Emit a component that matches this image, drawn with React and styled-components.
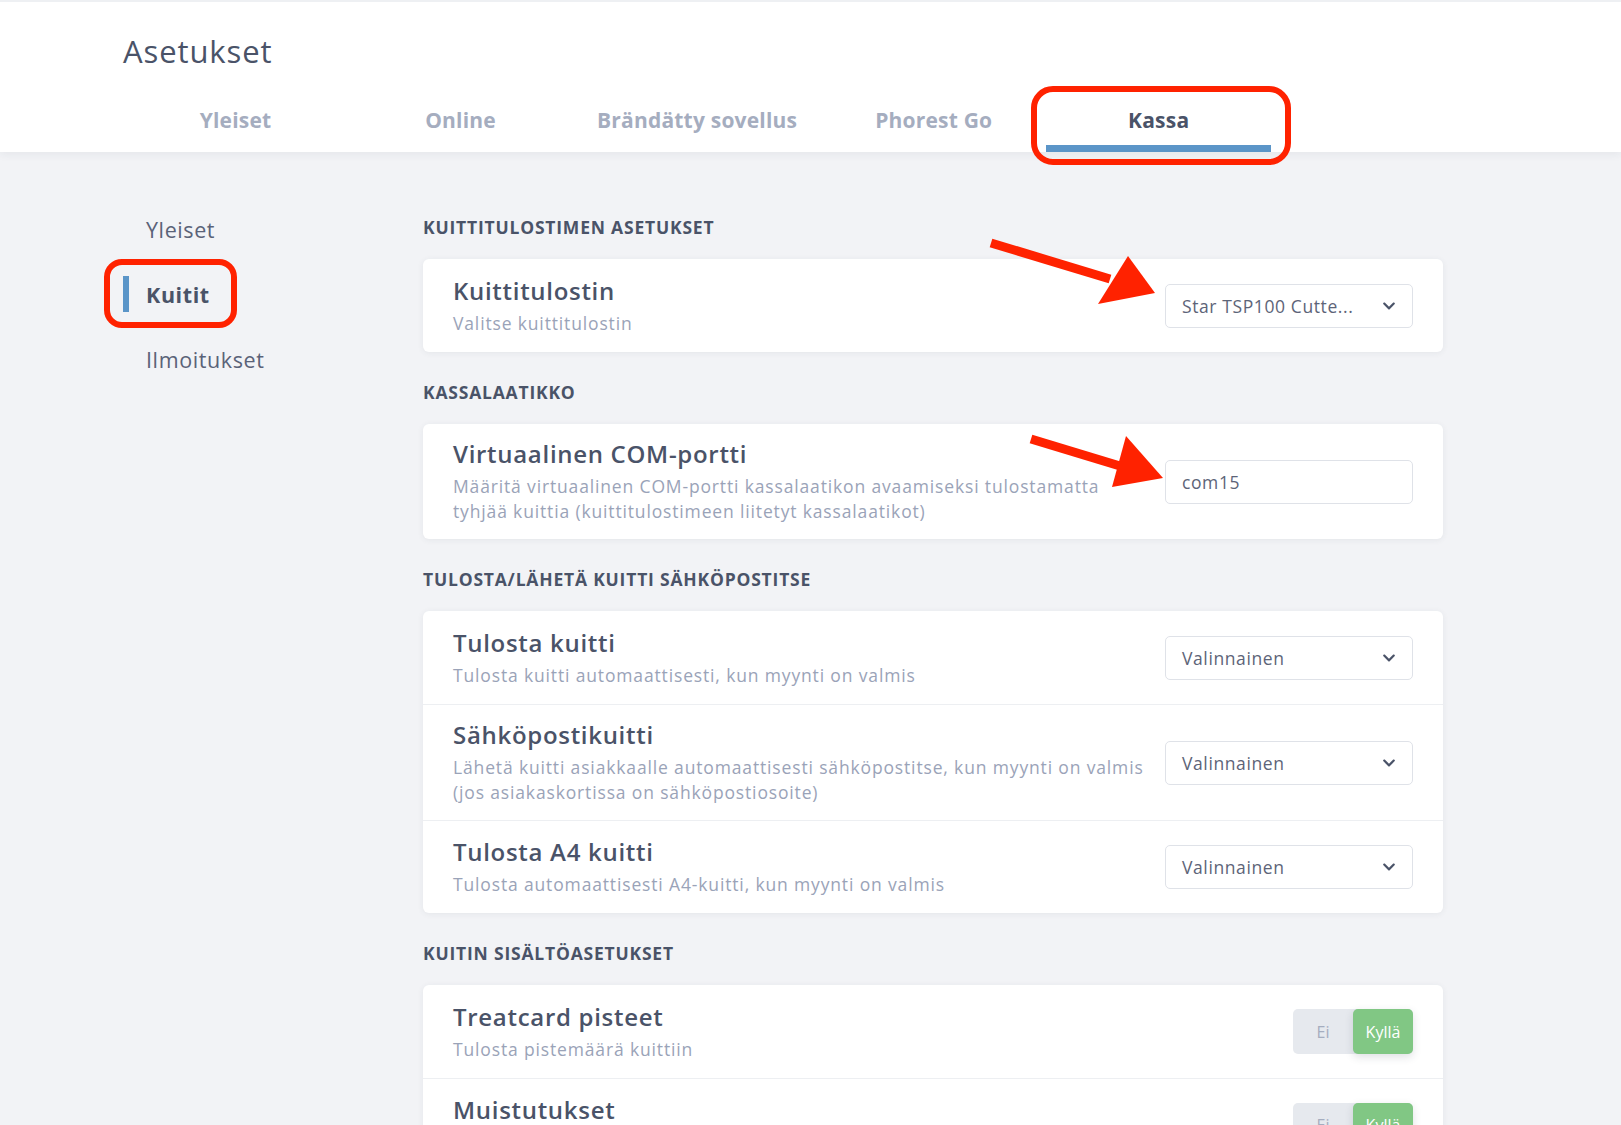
import React from "react";
import styled, { createGlobalStyle } from "styled-components";
import { FaChevronDown } from "react-icons/fa";

const GlobalStyle = createGlobalStyle`
  * { box-sizing: border-box; }
  body {
    margin: 0;
    background: #f2f3f6;
    font-family: "Open Sans", "Noto Sans", sans-serif;
    color: #4a5368;
  }
`;

const tabs = ["Yleiset", "Online", "Brändätty sovellus", "Phorest Go", "Kassa"];
const sideItems = ["Yleiset", "Kuitit", "Ilmoitukset"];

const App = () => {
  return (
    <Page>
      <GlobalStyle />
      <Header>
        <Title>Asetukset</Title>
        <TabRow>
          {tabs.map((t) => (
            <Tab key={t} active={t === "Kassa"}>
              {t}
              {t === "Kassa" && <TabMark />}
            </Tab>
          ))}
        </TabRow>
      </Header>

      <Body>
        <Sidebar>
          {sideItems.map((s) => (
            <SideItem key={s} active={s === "Kuitit"}>
              {s}
              {s === "Kuitit" && <SideMark />}
            </SideItem>
          ))}
        </Sidebar>

        <Main>
          <SectionTitle>Kuittitulostimen asetukset</SectionTitle>
          <Card>
            <Row>
              <RowText>
                <RowTitle>Kuittitulostin</RowTitle>
                <RowDesc>Valitse kuittitulostin</RowDesc>
              </RowText>
              <Select>
                <span>Star TSP100 Cutte...</span>
                <FaChevronDown size={14} />
              </Select>
            </Row>
          </Card>

          <SectionTitle>Kassalaatikko</SectionTitle>
          <Card>
            <Row>
              <RowText>
                <RowTitle>Virtuaalinen COM-portti</RowTitle>
                <RowDesc>
                  Määritä virtuaalinen COM-portti kassalaatikon avaamiseksi tulostamatta
                  <br />
                  tyhjää kuittia (kuittitulostimeen liitetyt kassalaatikot)
                </RowDesc>
              </RowText>
              <Input>com15</Input>
            </Row>
          </Card>

          <SectionTitle>Tulosta/lähetä kuitti sähköpostitse</SectionTitle>
          <Card>
            <Row>
              <RowText>
                <RowTitle>Tulosta kuitti</RowTitle>
                <RowDesc>Tulosta kuitti automaattisesti, kun myynti on valmis</RowDesc>
              </RowText>
              <Select>
                <span>Valinnainen</span>
                <FaChevronDown size={14} />
              </Select>
            </Row>
            <Row>
              <RowText>
                <RowTitle>Sähköpostikuitti</RowTitle>
                <RowDesc>
                  Lähetä kuitti asiakkaalle automaattisesti sähköpostitse, kun myynti on valmis
                  <br />
                  (jos asiakaskortissa on sähköpostiosoite)
                </RowDesc>
              </RowText>
              <Select>
                <span>Valinnainen</span>
                <FaChevronDown size={14} />
              </Select>
            </Row>
            <Row>
              <RowText>
                <RowTitle>Tulosta A4 kuitti</RowTitle>
                <RowDesc>Tulosta automaattisesti A4-kuitti, kun myynti on valmis</RowDesc>
              </RowText>
              <Select>
                <span>Valinnainen</span>
                <FaChevronDown size={14} />
              </Select>
            </Row>
          </Card>

          <SectionTitle>Kuitin sisältöasetukset</SectionTitle>
          <Card>
            <Row>
              <RowText>
                <RowTitle>Treatcard pisteet</RowTitle>
                <RowDesc>Tulosta pistemäärä kuittiin</RowDesc>
              </RowText>
              <Toggle>
                <ToggleOpt>Ei</ToggleOpt>
                <ToggleOpt on>Kyllä</ToggleOpt>
              </Toggle>
            </Row>
            <Row>
              <RowText>
                <RowTitle>Muistutukset</RowTitle>
                <RowDesc>Tulosta tulevat ajanvaraukset kuittiin</RowDesc>
              </RowText>
              <Toggle>
                <ToggleOpt>Ei</ToggleOpt>
                <ToggleOpt on>Kyllä</ToggleOpt>
              </Toggle>
            </Row>
          </Card>
        </Main>
      </Body>

      <Arrows width="1621" height="1125" viewBox="0 0 1621 1125">
        <line x1="991" y1="243" x2="1110" y2="279" stroke="#ff2200" strokeWidth="9" />
        <polygon points="1155,293 1098,304 1128,256" fill="#ff2200" />
        <line x1="1031" y1="439" x2="1120" y2="466" stroke="#ff2200" strokeWidth="9" />
        <polygon points="1163,478 1112,487 1126,436" fill="#ff2200" />
      </Arrows>
    </Page>
  );
};

const Page = styled.div`
  position: relative;
  min-height: 100vh;
  overflow: hidden;
`;

const Header = styled.header`
  background: #ffffff;
  border-top: 2px solid #eef0f3;
  padding: 31px 0 0 123px;
  box-shadow: 0 3px 8px rgba(40, 50, 70, 0.06);
  position: relative;
  z-index: 1;
`;

const Title = styled.h1`
  margin: 0;
  font-size: 31px;
  line-height: 36px;
  font-weight: 500;
  color: #4a5368;
  letter-spacing: 0.9px;
`;

const TabRow = styled.nav`
  display: flex;
  margin-top: 23px;
`;

const Tab = styled.div`
  position: relative;
  min-width: 225px;
  height: 60px;
  display: flex;
  align-items: center;
  justify-content: center;
  padding: 2px 24px 0;
  font-size: 21px;
  font-weight: 700;
  letter-spacing: 0.2px;
  color: ${(p) => (p.active ? "#4a5368" : "#a5adbf")};
  border-bottom: 7px solid ${(p) => (p.active ? "#5b95c8" : "transparent")};
`;

const TabMark = styled.span`
  position: absolute;
  top: -6px;
  left: -15px;
  right: -20px;
  bottom: -20px;
  border: 6px solid #ff2200;
  border-radius: 22px;
`;

const Body = styled.div`
  display: flex;
  padding-left: 123px;
`;

const Sidebar = styled.aside`
  width: 300px;
  flex-shrink: 0;
  padding-top: 59px;
  display: flex;
  flex-direction: column;
  gap: 29px;
`;

const SideItem = styled.div`
  position: relative;
  height: 36px;
  display: flex;
  align-items: center;
  padding-left: 17px;
  font-size: 21.5px;
  letter-spacing: 0.6px;
  font-weight: ${(p) => (p.active ? 700 : 400)};
  color: ${(p) => (p.active ? "#4a5368" : "#5a6278")};
  border-left: 6px solid ${(p) => (p.active ? "#5b95c8" : "transparent")};
`;

const SideMark = styled.span`
  position: absolute;
  top: -17px;
  left: -25px;
  width: 133px;
  height: 69px;
  border: 6px solid #ff2200;
  border-radius: 18px;
`;

const Main = styled.main`
  width: 1020px;
  padding-top: 65px;
  padding-bottom: 40px;
`;

const SectionTitle = styled.h2`
  margin: 0 0 22px;
  font-size: 17.5px;
  line-height: 20px;
  font-weight: 700;
  text-transform: uppercase;
  letter-spacing: 0.8px;
  color: #4a5368;

  & ~ & {
    margin-top: 30px;
  }
`;

const Card = styled.section`
  background: #ffffff;
  border-radius: 6px;
  box-shadow: 0 1px 6px rgba(40, 50, 70, 0.07);
`;

const Row = styled.div`
  display: flex;
  align-items: center;
  justify-content: space-between;
  gap: 16px;
  min-height: 93px;
  padding: 15px 30px;

  & + & {
    border-top: 1px solid #edeff2;
  }
`;

const RowText = styled.div`
  display: flex;
  flex-direction: column;
  gap: 5px;
`;

const RowTitle = styled.div`
  font-size: 24px;
  line-height: 30px;
  font-weight: 600;
  letter-spacing: 0.7px;
  color: #4a5368;
`;

const RowDesc = styled.div`
  font-size: 17.5px;
  line-height: 25px;
  font-weight: 400;
  letter-spacing: 0.85px;
  color: #9aa3b8;
  white-space: nowrap;
`;

const Select = styled.div`
  width: 248px;
  height: 44px;
  flex-shrink: 0;
  display: flex;
  align-items: center;
  justify-content: space-between;
  padding: 0 16px 0 16px;
  border: 1px solid #dfe2e8;
  border-radius: 5px;
  font-size: 17.5px;
  letter-spacing: 0.6px;
  color: #5d6478;

  svg {
    color: #4a5368;
  }
`;

const Input = styled(Select)``;

const Toggle = styled.div`
  display: flex;
  width: 120px;
  height: 45px;
  flex-shrink: 0;
  border-radius: 5px;
  background: #e6e9ee;
`;

const ToggleOpt = styled.div`
  flex: 1;
  display: flex;
  align-items: center;
  justify-content: center;
  font-size: 16px;
  border-radius: 5px;
  color: ${(p) => (p.on ? "#ffffff" : "#a5adbf")};
  background: ${(p) => (p.on ? "#81c784" : "transparent")};
  box-shadow: ${(p) => (p.on ? "0 3px 8px rgba(40, 50, 70, 0.15)" : "none")};
`;

const Arrows = styled.svg`
  position: absolute;
  top: 0;
  left: 0;
  pointer-events: none;
  z-index: 2;
`;

export default App;
